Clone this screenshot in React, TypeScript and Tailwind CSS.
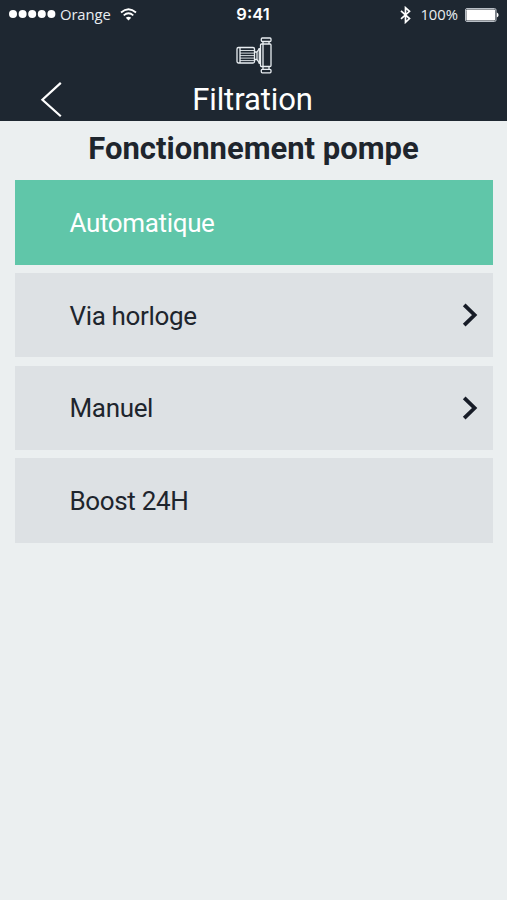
import type { ReactNode } from "react";

interface Mode {
  label: string;
  active?: boolean;
  hasDetail?: boolean;
}

const MODES: Mode[] = [
  { label: "Automatique", active: true },
  { label: "Via horloge", hasDetail: true },
  { label: "Manuel", hasDetail: true },
  { label: "Boost 24H" },
];

function SignalDots() {
  return (
    <svg width="47" height="8" viewBox="0 0 47 8" fill="#fff" aria-hidden>
      {[4, 13.6, 23.2, 32.8, 42.4].map((cx) => (
        <circle key={cx} cx={cx} cy="4" r="4" />
      ))}
    </svg>
  );
}

function WifiIcon() {
  return (
    <svg width="17" height="13" viewBox="0 0 17 13" fill="none" aria-hidden>
      <path d="M1 4.5Q8.5-2 16 4.5" stroke="#fff" strokeWidth="1.8" />
      <path d="M3.7 7.3Q8.5 3.2 13.3 7.3" stroke="#fff" strokeWidth="1.7" />
      <path d="M8.5 12.5L5.8 9.7Q8.5 7.6 11.2 9.7Z" fill="#fff" />
    </svg>
  );
}

function BluetoothIcon() {
  return (
    <svg width="11" height="18" viewBox="0 0 11 18" fill="none" aria-hidden>
      <path
        d="M1 4.8L9.5 12.5L5.5 16.3V1.7L9.5 5.3L1 12.8"
        stroke="#fff"
        strokeWidth="1.7"
      />
    </svg>
  );
}

function BatteryIcon() {
  return (
    <svg width="34" height="14" viewBox="0 0 34 14" aria-hidden>
      <rect x="0.5" y="0.5" width="30.5" height="13" rx="1.5" fill="none" stroke="#b9bfc6" />
      <rect x="1.4" y="1.4" width="28.7" height="11.2" rx="0.8" fill="#fff" />
      <path d="M31.8 4.5Q33.6 5.3 33.6 7T31.8 9.5Z" fill="#fff" />
    </svg>
  );
}

function PumpIcon() {
  return (
    <svg
      width="37"
      height="37"
      viewBox="0 0 37 37"
      fill="none"
      stroke="#e9eef2"
      strokeWidth="1.3"
      aria-hidden
    >
      {/* motor */}
      <rect x="1" y="10.5" width="17.5" height="15.5" rx="1.5" />
      <path d="M4 10.5v15.5" />
      <path d="M4 13.5h14.5M4 16.1h14.5M4 18.6h14.5M4 21.1h14.5M4 23.6h14.5" strokeWidth="0.9" />
      {/* coupling */}
      <path d="M18.5 15H21l2.3-3.5M18.5 22.5H21l2.3 3.5M21 15v7.5" />
      {/* body and flanges */}
      <path d="M23.3 11v16" />
      <rect x="24.5" y="7" width="10.5" height="22.5" rx="1" />
      <path d="M27 4.5v28M33 4.5V7M33 29.5v3" />
      <rect x="25.3" y="1" width="9.7" height="3.5" rx="1" />
      <rect x="25.3" y="32.3" width="9.7" height="3.5" rx="1" />
    </svg>
  );
}

function StatusBar() {
  return (
    <div className="grid h-[29px] grid-cols-[1fr_auto_1fr] items-center pr-2 pl-[9px] font-['Open_Sans',sans-serif] text-[14.8px] leading-none text-[#e9eef2]">
      <div className="flex items-center">
        <SignalDots />
        <span className="ml-[4px] tracking-[-0.1px]">Orange</span>
        <span className="ml-[9px]">
          <WifiIcon />
        </span>
      </div>
      <span className="-mt-px mr-[2px] font-['Inter',sans-serif] text-[16.5px] font-semibold text-white">
        9:41
      </span>
      <div className="flex items-center justify-end">
        <BluetoothIcon />
        <span className="mr-[7px] ml-[9px]">100%</span>
        <BatteryIcon />
      </div>
    </div>
  );
}

function Header({ children }: { children: ReactNode }) {
  return (
    <header className="h-[121px] bg-[#1e2731]">
      <StatusBar />
      <div className="flex h-[50px] justify-center pt-[8px] pl-[2px]">
        <PumpIcon />
      </div>
      <div className="grid h-[41px] grid-cols-[1fr_auto_1fr] items-center">
        <button type="button" aria-label="Retour" className="ml-[40px] w-[23px]">
          <svg width="23" height="37" viewBox="0 0 23 37" fill="none" aria-hidden>
            <path d="M20.8 1.9L2.4 18.7L20.8 35.2" stroke="#fff" strokeWidth="2.2" />
          </svg>
        </button>
        <h1 className="pr-[2px] text-[31px] leading-none tracking-[-0.1px] text-white">{children}</h1>
      </div>
    </header>
  );
}

function ModeRow({ label, active, hasDetail }: Mode) {
  return (
    <li
      className={
        active
          ? "flex h-[84.5px] items-center justify-between bg-[#60c6a9] pr-[15px] pl-[55px] text-white"
          : "flex h-[84.5px] items-center justify-between bg-[#dde1e4] pr-[15px] pl-[55px] text-[#1e252d]"
      }
    >
      <span className="pt-[0.6px] text-[26px] leading-none tracking-[-0.35px]">{label}</span>
      {hasDetail && (
        <svg width="16" height="24" viewBox="0 0 16 24" fill="none" aria-hidden>
          <path d="M2.2 1.8L12.6 12L2.2 22.2" stroke="#171c27" strokeWidth="3.8" />
        </svg>
      )}
    </li>
  );
}

export default function App() {
  return (
    <div className="min-h-screen bg-[#ebeff0] font-['Roboto',sans-serif]">
      <Header>Filtration</Header>
      <main className="px-[14.5px]">
        <h2 className="flex h-[59.3px] items-center justify-center pb-[4px] text-[31px] leading-none font-bold text-[#1e252d]">
          Fonctionnement pompe
        </h2>
        <ul className="flex flex-col gap-[8.2px]">
          {MODES.map((mode) => (
            <ModeRow key={mode.label} {...mode} />
          ))}
        </ul>
      </main>
    </div>
  );
}
